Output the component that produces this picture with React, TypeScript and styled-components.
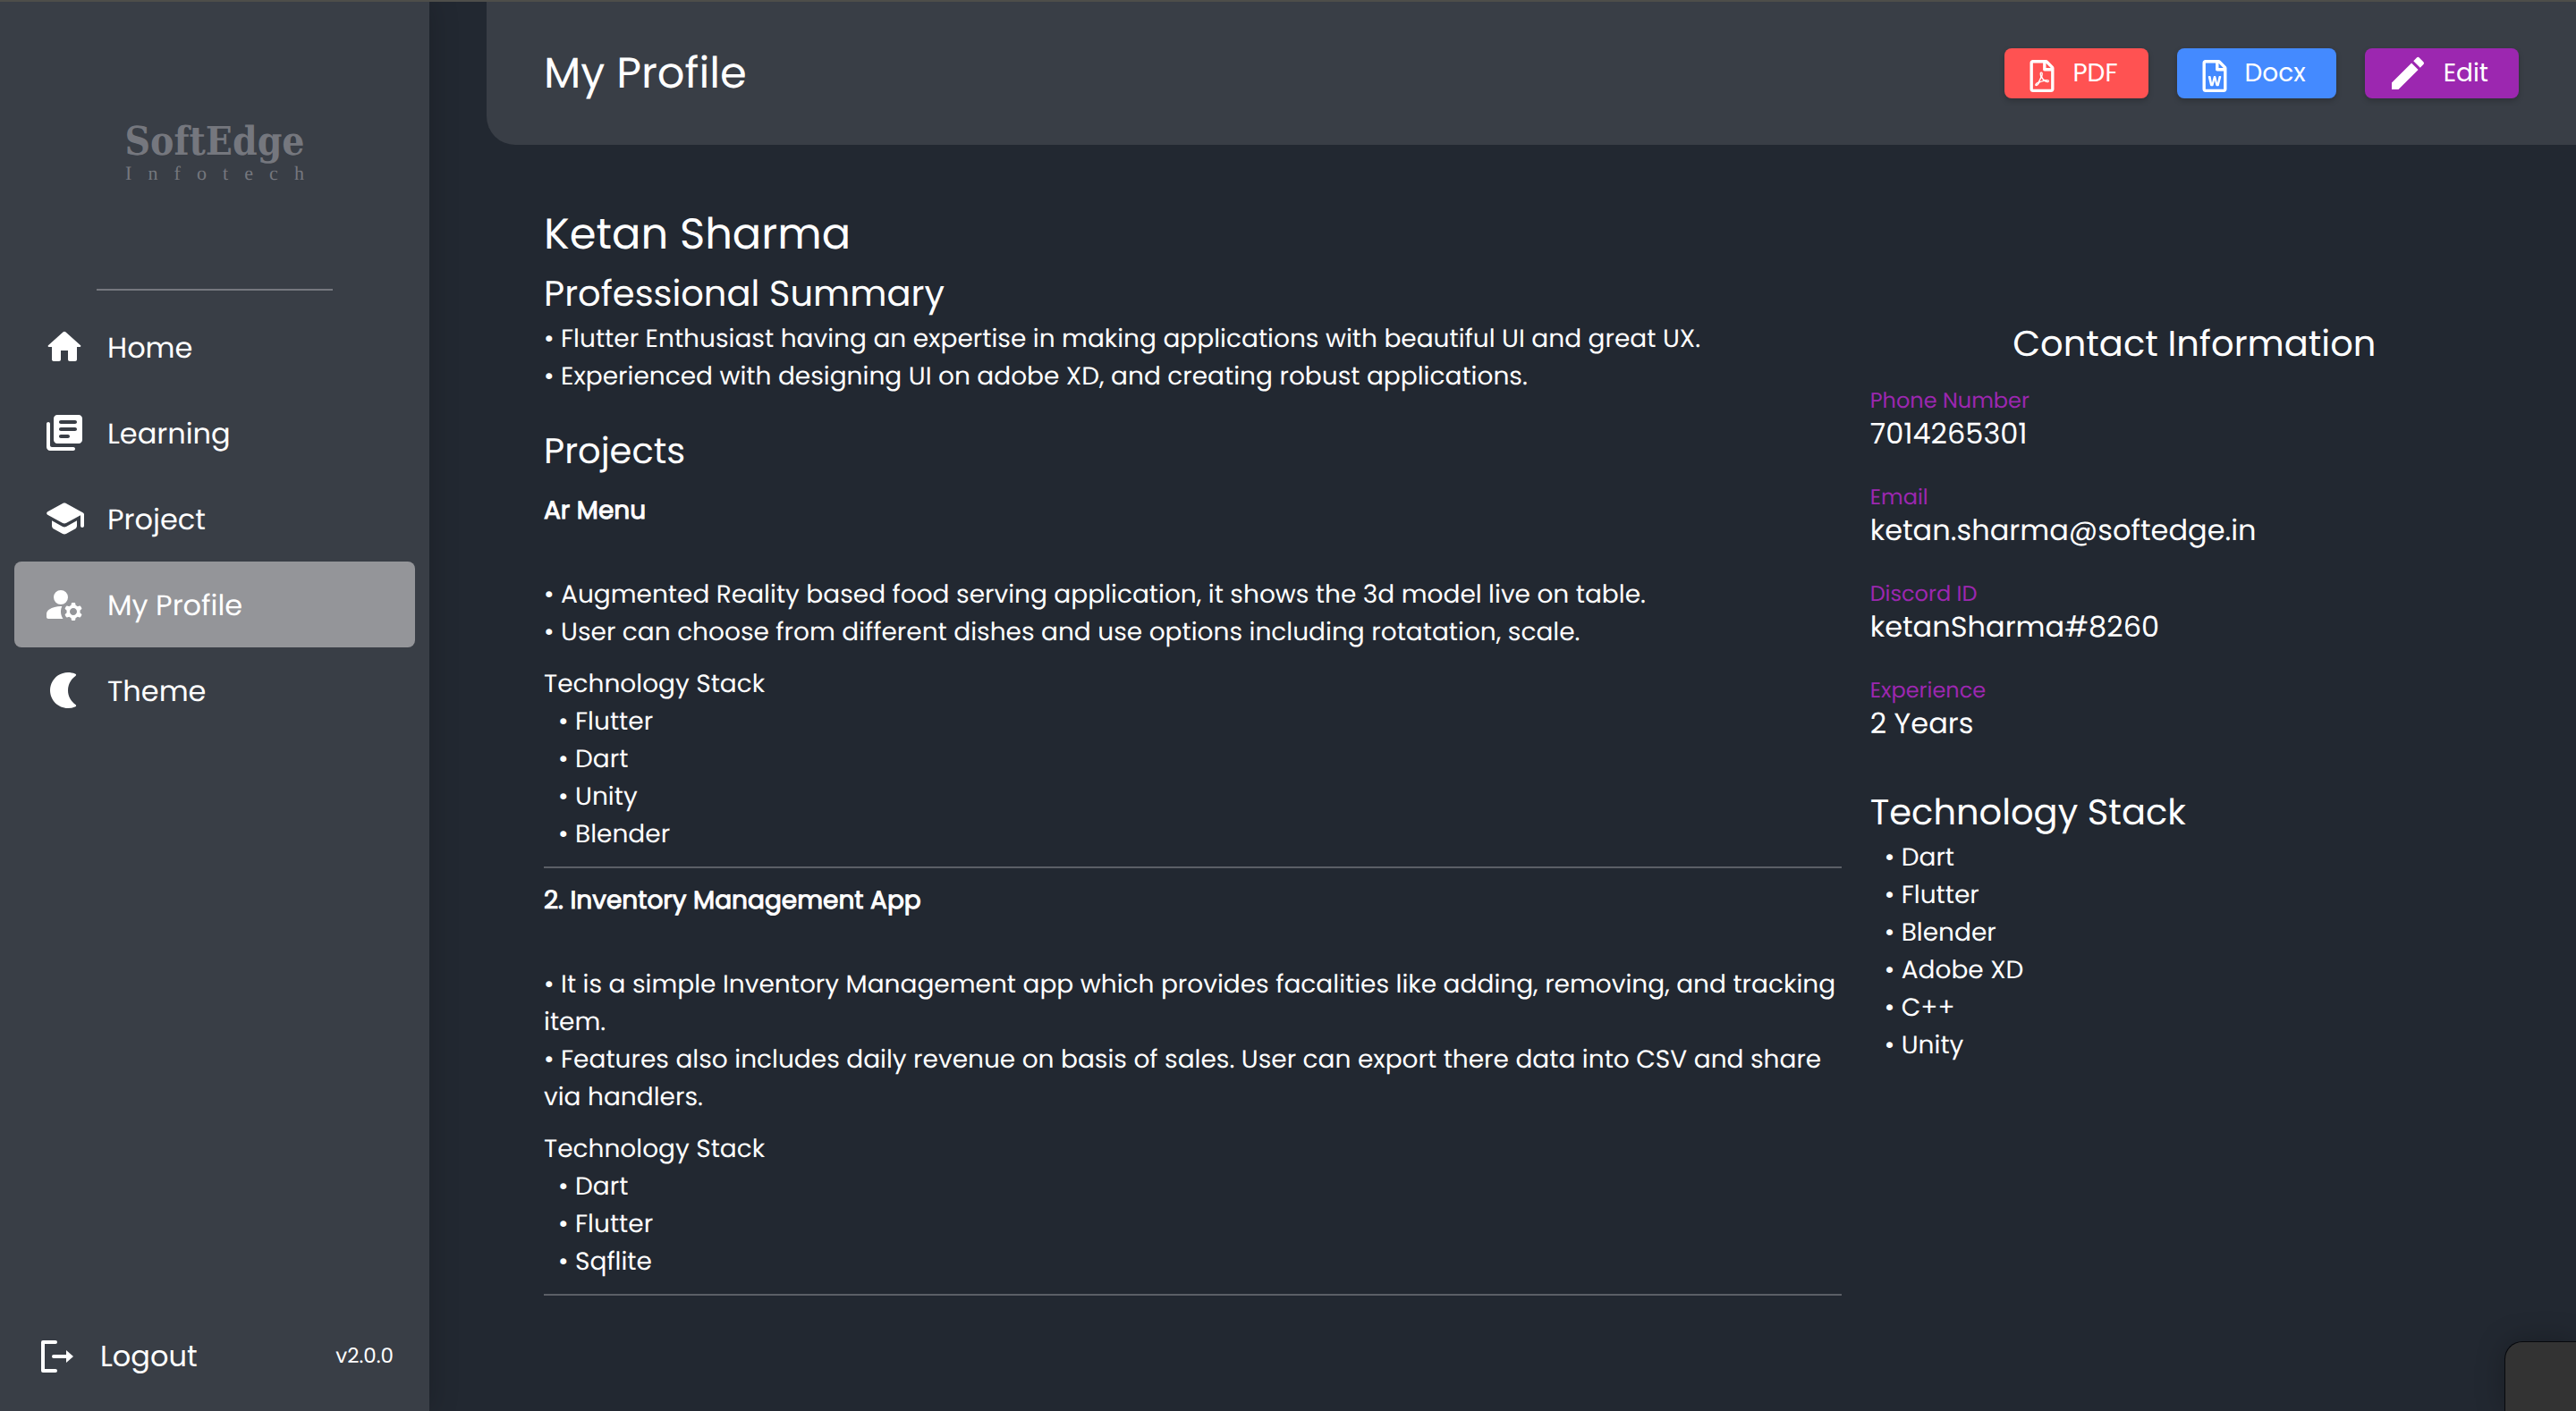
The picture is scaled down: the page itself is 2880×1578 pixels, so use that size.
import React from "react";
import styled, { createGlobalStyle } from "styled-components";
import { MdEdit } from "react-icons/md";
import { FaRegFilePdf, FaRegFileWord } from "react-icons/fa";

const GlobalStyle = createGlobalStyle`
  * { box-sizing: border-box; }
  html, body, #root { height: 100%; }
  body {
    margin: 0;
    background: #222831;
    color: #ffffff;
    font-family: Poppins, Inter, "Liberation Sans", sans-serif;
    font-size: 28px;
    line-height: 42px;
    text-rendering: geometricPrecision;
  }
  h1, h2, h3, h4, p, ul, dl, dd { margin: 0; padding: 0; font-weight: 400; }
`;

const Page = styled.div`
  display: flex;
  min-height: 100%;
  border-top: 2px solid #4e4e4a;
  overflow: hidden;
`;

const Sidebar = styled.aside`
  flex: 0 0 480px;
  display: flex;
  flex-direction: column;
  background: #393e46;
  box-shadow: 0 0 32px rgba(0, 0, 0, 0.2);
`;

const Brand = styled.div`
  height: 321px;
  display: flex;
  flex-direction: column;
  align-items: center;
  justify-content: center;
  padding-top: 16px;
  color: #75777e;
`;

const BrandName = styled.div`
  font-family: "DejaVu Serif Condensed", "DejaVu Serif", serif;
  font-weight: 700;
  font-size: 44px;
  line-height: 46px;
`;

const BrandTag = styled.div`
  width: 200px;
  display: flex;
  justify-content: space-between;
  font-family: "Liberation Serif", serif;
  font-size: 22px;
  line-height: 24px;
`;

const SideRule = styled.hr`
  width: 264px;
  height: 2px;
  margin: 0 auto 15px;
  border: 0;
  background: #75777e;
`;

const Nav = styled.nav`
  display: flex;
  flex-direction: column;
  padding: 0 16px;
`;

const NavLink = styled.a<{ $active?: boolean }>`
  height: 96px;
  display: flex;
  align-items: center;
  gap: 24px;
  padding: 0 32px;
  border-radius: 8px;
  color: #ffffff;
  font-size: 32px;
  line-height: 48px;
  text-decoration: none;
  background: ${(p) => (p.$active ? "#949599" : "transparent")};
`;

const NavLabel = styled.span`
  padding-top: 3px;
`;

const SideFooter = styled.div`
  display: flex;
  align-items: center;
  justify-content: space-between;
  margin-top: auto;
  padding: 0 40px 37px;
`;

const LogoutButton = styled.button`
  display: flex;
  align-items: center;
  gap: 24px;
  padding: 0;
  border: 0;
  background: none;
  color: inherit;
  font: inherit;
  font-size: 32px;
  line-height: 48px;
`;

const Version = styled.span`
  font-size: 23px;
  line-height: 30px;
`;

const Main = styled.main`
  flex: 1;
  min-width: 0;
  padding-left: 64px;
`;

const Header = styled.header`
  height: 160px;
  display: flex;
  align-items: center;
  justify-content: space-between;
  padding: 0 64px;
  border-bottom-left-radius: 32px;
  background: #393e46;
`;

const Title = styled.h1`
  font-size: 48px;
  line-height: 72px;
`;

const Actions = styled.div`
  display: flex;
  gap: 32px;
`;

const ActionButton = styled.button<{ $color: string }>`
  height: 56px;
  display: flex;
  align-items: center;
  gap: 16px;
  padding: 0 34px 0 24px;
  border: 0;
  border-radius: 8px;
  background: ${(p) => p.$color};
  box-shadow: 0 3px 6px rgba(0, 0, 0, 0.2);
  color: #ffffff;
  font: inherit;
`;

const FileGlyph = styled.span`
  display: flex;
  padding-top: 5px;
`;

const Content = styled.div`
  display: grid;
  grid-template-columns: 2fr 1fr;
  gap: 32px;
  padding: 64px;
`;

const Name = styled.h2`
  font-size: 48px;
  line-height: 72px;
`;

const Heading = styled.h3<{ $center?: boolean }>`
  font-size: 40px;
  line-height: 60px;
  text-align: ${(p) => (p.$center ? "center" : "left")};
`;

const Projects = styled.section`
  padding-top: 32px;
`;

const Project = styled.article`
  padding: 16px 0 15px;
  border-bottom: 2px solid #5b5f66;
  & + & { padding-top: 15px; }
`;

const ProjectName = styled.h4`
  padding-bottom: 52px;
  -webkit-text-stroke: 1px currentColor;
`;

const StackTitle = styled.p`
  padding-top: 16px;
`;

const List = styled.ul<{ $indent?: boolean }>`
  list-style: none;
  padding-left: ${(p) => (p.$indent ? "16px" : "0")};
`;

const Contact = styled.section`
  padding-top: 128px;
`;

const Fields = styled.dl`
  display: flex;
  flex-direction: column;
  gap: 34px;
  padding: 20px 0 46px;
`;

const Label = styled.dt`
  color: #9c27b0;
  font-size: 24px;
  line-height: 30px;
`;

const Value = styled.dd`
  font-size: 32px;
  line-height: 44px;
`;

const Corner = styled.div`
  position: fixed;
  right: 0;
  bottom: 0;
  width: 80px;
  height: 78px;
  border: solid #07090d;
  border-width: 1px 0 0 1px;
  border-top-left-radius: 20px;
  background: #333333;
  box-shadow: 0 0 32px rgba(0, 0, 0, 0.25);
`;

const Glyph = ({ d }: { d: string }) => (
  <svg width="48" height="48" viewBox="0 0 24 24" fill="currentColor" aria-hidden="true">
    <path d={d} />
  </svg>
);

const HOME =
  "M10 19v-5h4v5c0 .55.45 1 1 1h3c.55 0 1-.45 1-1v-7h1.7c.46 0 .68-.57.33-.87L12.67 3.6c-.38-.34-.96-.34-1.34 0l-8.36 7.53c-.34.3-.13.87.33.87H5v7c0 .55.45 1 1 1h3c.55 0 1-.45 1-1z";
const BOOKS =
  "M3 6c-.55 0-1 .45-1 1v13c0 1.1.9 2 2 2h13c.55 0 1-.45 1-1s-.45-1-1-1H5c-.55 0-1-.45-1-1V7c0-.55-.45-1-1-1zm17-4H8c-1.1 0-2 .9-2 2v12c0 1.1.9 2 2 2h12c1.1 0 2-.9 2-2V4c0-1.1-.9-2-2-2zm-2 9h-8c-.55 0-1-.45-1-1s.45-1 1-1h8c.55 0 1 .45 1 1s-.45 1-1 1zm-4 4h-4c-.55 0-1-.45-1-1s.45-1 1-1h4c.55 0 1 .45 1 1s-.45 1-1 1zm4-8h-8c-.55 0-1-.45-1-1s.45-1 1-1h8c.55 0 1 .45 1 1s-.45 1-1 1z";
const SCHOOL =
  "M5 13.18v2.81c0 .73.4 1.41 1.04 1.76l5 2.73c.6.33 1.32.33 1.92 0l5-2.73c.64-.35 1.04-1.03 1.04-1.76v-2.81l-6.04 3.3c-.6.33-1.32.33-1.92 0L5 13.18zm6.04-9.66l-8.43 4.6c-.69.38-.69 1.38 0 1.76l8.43 4.6c.6.33 1.32.33 1.92 0L21 10.09V16c0 .55.45 1 1 1s1-.45 1-1V9.59c0-.37-.2-.7-.52-.88l-9.52-5.19c-.6-.32-1.32-.32-1.92 0z";
const ACCOUNT =
  "M10 4a4 4 0 1 0 0 8 4 4 0 0 0 0-8zM10.67 13.02C10.45 13.01 10.23 13 10 13c-2.42 0-4.68.67-6.61 1.82-.88.52-1.39 1.5-1.39 2.53V19c0 .55.45 1 1 1h8.26c-.79-1.13-1.26-2.51-1.26-4 0-1.07.25-2.07.67-2.98zM20.75 16c0-.22-.03-.42-.06-.63l.84-.73c.18-.16.22-.42.1-.63l-.59-1.02c-.12-.21-.37-.3-.59-.22l-1.06.36c-.32-.27-.68-.48-1.08-.63l-.22-1.09c-.05-.23-.25-.4-.49-.4h-1.18c-.24 0-.44.17-.49.4l-.22 1.09c-.4.15-.76.36-1.08.63l-1.06-.36c-.23-.08-.47.02-.59.22l-.59 1.02c-.12.21-.08.47.1.63l.84.73c-.03.21-.06.41-.06.63s.03.42.06.63l-.84.73c-.18.16-.22.42-.1.63l.59 1.02c.12.21.37.3.59.22l1.06-.36c.32.27.68.48 1.08.63l.22 1.09c.05.23.25.4.49.4h1.18c.24 0 .44-.17.49-.4l.22-1.09c.4-.15.76-.36 1.08-.63l1.06.36c.23.08.47-.02.59-.22l.59-1.02c.12-.21.08-.47-.1-.63l-.84-.73c.03-.21.06-.41.06-.63zM17 18c-1.1 0-2-.9-2-2s.9-2 2-2 2 .9 2 2-.9 2-2 2z";
const MOON =
  "M14 2c1.4 0 2.7.25 3.95.75.75.3.8.8.25 1.25C15.6 5.9 14 8.75 14 12s1.6 6.1 4.2 8c.55.45.5.95-.25 1.25A10.4 10.4 0 0 1 14 22C8.48 22 4 17.52 4 12S8.48 2 14 2z";

const LogoutIcon = () => (
  <svg width="48" height="48" viewBox="0 0 48 48" aria-hidden="true">
    <path d="M22 8H8v32h14" fill="none" stroke="currentColor" strokeWidth="4" strokeLinecap="round" strokeLinejoin="round" />
    <path d="M20 24h16" stroke="currentColor" strokeWidth="4" strokeLinecap="round" />
    <path d="M34 17l8 7-8 7z" fill="currentColor" />
  </svg>
);

const navItems = [
  { label: "Home", href: "#home", icon: HOME },
  { label: "Learning", href: "#learning", icon: BOOKS },
  { label: "Project", href: "#project", icon: SCHOOL },
  { label: "My Profile", href: "#profile", icon: ACCOUNT, active: true },
  { label: "Theme", href: "#theme", icon: MOON },
];

const summary = [
  "Flutter Enthusiast having an expertise in making applications with beautiful UI and great UX.",
  "Experienced with designing UI on adobe XD, and creating robust applications.",
];

const projects = [
  {
    name: "Ar Menu",
    points: [
      "Augmented Reality based food serving application, it shows the 3d model live on table.",
      "User can choose from different dishes and use options including rotatation, scale.",
    ],
    stack: ["Flutter", "Dart", "Unity", "Blender"],
  },
  {
    name: "2. Inventory Management App",
    points: [
      "It is a simple Inventory Management app which provides facalities like adding, removing, and tracking item.",
      "Features also includes daily revenue on basis of sales. User can export there data into CSV and share via handlers.",
    ],
    stack: ["Dart", "Flutter", "Sqflite"],
  },
];

const fields = [
  ["Phone Number", "7014265301"],
  ["Email", "ketan.sharma@softedge.in"],
  ["Discord ID", "ketanSharma#8260"],
  ["Experience", "2 Years"],
];

const skills = ["Dart", "Flutter", "Blender", "Adobe XD", "C++", "Unity"];

const Bullets = ({ items, indent }: { items: string[]; indent?: boolean }) => (
  <List $indent={indent}>
    {items.map((item) => (
      <li key={item}>{`• ${item}`}</li>
    ))}
  </List>
);

export default function App() {
  return (
    <>
      <GlobalStyle />
      <Page>
        <Sidebar>
          <Brand>
            <BrandName>SoftEdge</BrandName>
            <BrandTag>
              {"Infotech".split("").map((letter, i) => (
                <span key={i}>{letter}</span>
              ))}
            </BrandTag>
          </Brand>
          <SideRule />
          <Nav>
            {navItems.map((item) => (
              <NavLink key={item.label} href={item.href} $active={item.active} aria-current={item.active ? "page" : undefined}>
                <Glyph d={item.icon} />
                <NavLabel>{item.label}</NavLabel>
              </NavLink>
            ))}
          </Nav>
          <SideFooter>
            <LogoutButton type="button"><LogoutIcon />Logout</LogoutButton>
            <Version>v2.0.0</Version>
          </SideFooter>
        </Sidebar>
        <Main>
          <Header>
            <Title>My Profile</Title>
            <Actions>
              <ActionButton type="button" $color="#ff5252">
                <FileGlyph><FaRegFilePdf size={36} /></FileGlyph>PDF
              </ActionButton>
              <ActionButton type="button" $color="#448aff">
                <FileGlyph><FaRegFileWord size={36} /></FileGlyph>Docx
              </ActionButton>
              <ActionButton type="button" $color="#9c27b0"><MdEdit size={48} />Edit</ActionButton>
            </Actions>
          </Header>
          <Content>
            <div>
              <Name>Ketan Sharma</Name>
              <Heading>Professional Summary</Heading>
              <Bullets items={summary} />
              <Projects>
                <Heading>Projects</Heading>
                {projects.map((p) => (
                  <Project key={p.name}>
                    <ProjectName>{p.name}</ProjectName>
                    <Bullets items={p.points} />
                    <StackTitle>Technology Stack</StackTitle>
                    <Bullets items={p.stack} indent />
                  </Project>
                ))}
              </Projects>
            </div>
            <Contact>
              <Heading $center>Contact Information</Heading>
              <Fields>
                {fields.map(([label, value]) => (
                  <div key={label}>
                    <Label>{label}</Label>
                    <Value>{value}</Value>
                  </div>
                ))}
              </Fields>
              <Heading>Technology Stack</Heading>
              <Bullets items={skills} indent />
            </Contact>
          </Content>
        </Main>
      </Page>
      <Corner />
    </>
  );
}
